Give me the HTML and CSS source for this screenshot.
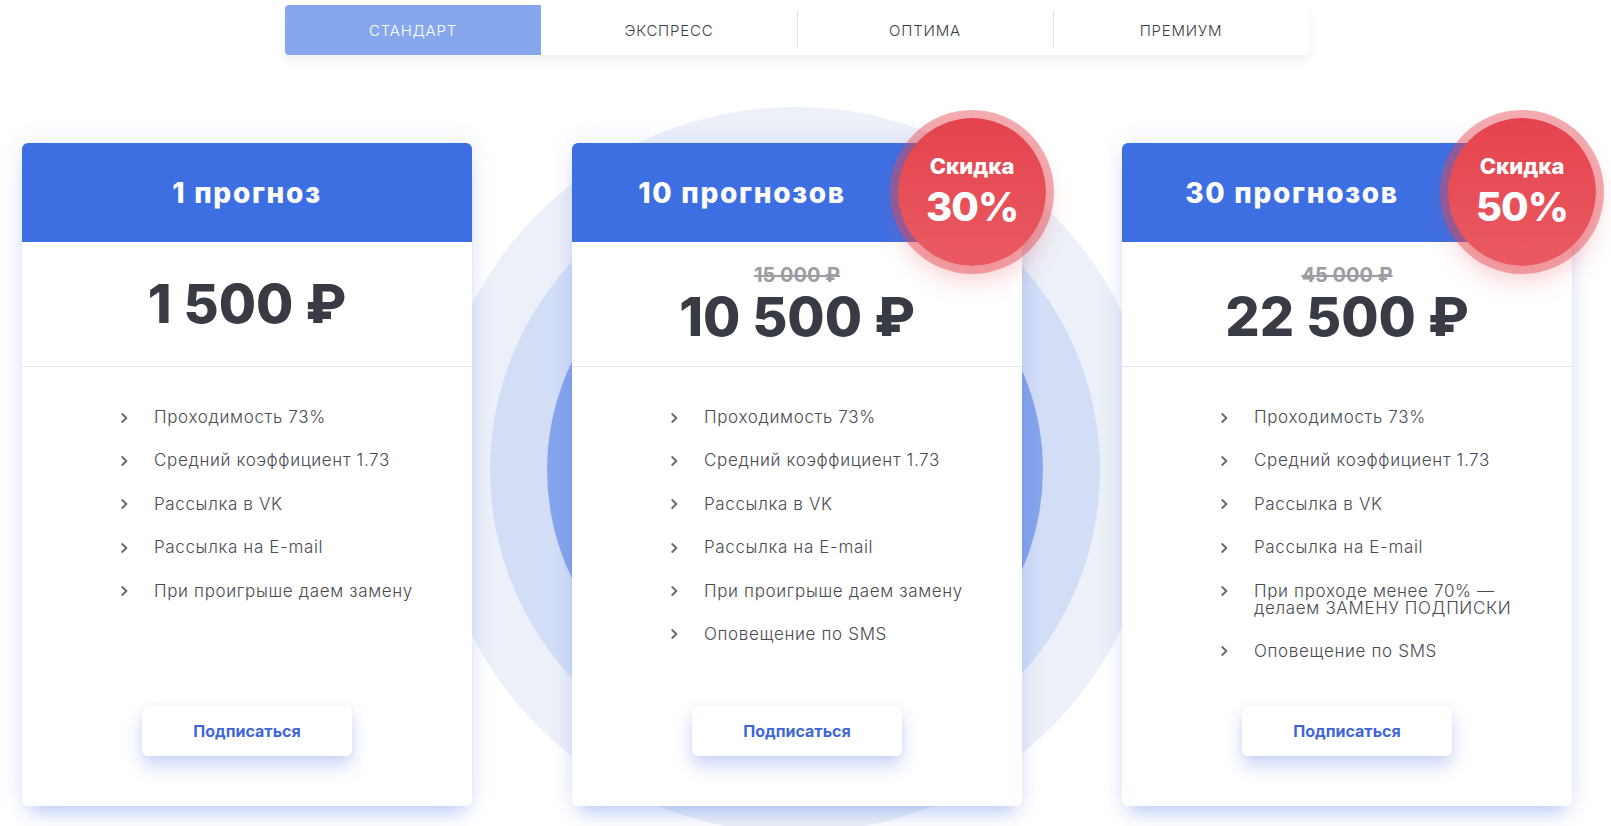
FILE: index.html
```html
<!DOCTYPE html>
<html lang="ru">
<head>
<meta charset="utf-8">
<title>Тарифы</title>
<link rel="stylesheet" href="styles.css">
</head>
<body>
<div class="page">
  <nav class="tabs">
    <div class="tab tab-active">Стандарт</div>
    <div class="tab">Экспресс</div>
    <div class="tab tab-sep">Оптима</div>
    <div class="tab tab-sep">Премиум</div>
  </nav>

  <div class="cards">
    <div class="rings"></div>

    <div class="card">
      <div class="card-head"><h2 class="card-title">1 прогноз</h2></div>
      <div class="card-price">
        <div class="price">1 500 ₽</div>
      </div>
      <ul class="features">
        <li><svg class="chev" viewBox="0 0 7 10"><path d="M1.2 1 L5.4 5 L1.2 9"/></svg><span>Проходимость 73%</span></li>
        <li><svg class="chev" viewBox="0 0 7 10"><path d="M1.2 1 L5.4 5 L1.2 9"/></svg><span>Средний коэффициент 1.73</span></li>
        <li><svg class="chev" viewBox="0 0 7 10"><path d="M1.2 1 L5.4 5 L1.2 9"/></svg><span>Рассылка в VK</span></li>
        <li><svg class="chev" viewBox="0 0 7 10"><path d="M1.2 1 L5.4 5 L1.2 9"/></svg><span>Рассылка на E-mail</span></li>
        <li><svg class="chev" viewBox="0 0 7 10"><path d="M1.2 1 L5.4 5 L1.2 9"/></svg><span>При проигрыше даем замену</span></li>
      </ul>
      <button class="btn">Подписаться</button>
    </div>

    <div class="card">
      <div class="card-head card-head-badge"><h2 class="card-title">10 прогнозов</h2></div>
      <div class="badge"><span class="badge-label">Скидка</span><span class="badge-value">30%</span></div>
      <div class="card-price">
        <div class="old-price">15 000 ₽</div>
        <div class="price">10 500 ₽</div>
      </div>
      <ul class="features">
        <li><svg class="chev" viewBox="0 0 7 10"><path d="M1.2 1 L5.4 5 L1.2 9"/></svg><span>Проходимость 73%</span></li>
        <li><svg class="chev" viewBox="0 0 7 10"><path d="M1.2 1 L5.4 5 L1.2 9"/></svg><span>Средний коэффициент 1.73</span></li>
        <li><svg class="chev" viewBox="0 0 7 10"><path d="M1.2 1 L5.4 5 L1.2 9"/></svg><span>Рассылка в VK</span></li>
        <li><svg class="chev" viewBox="0 0 7 10"><path d="M1.2 1 L5.4 5 L1.2 9"/></svg><span>Рассылка на E-mail</span></li>
        <li><svg class="chev" viewBox="0 0 7 10"><path d="M1.2 1 L5.4 5 L1.2 9"/></svg><span>При проигрыше даем замену</span></li>
        <li><svg class="chev" viewBox="0 0 7 10"><path d="M1.2 1 L5.4 5 L1.2 9"/></svg><span>Оповещение по SMS</span></li>
      </ul>
      <button class="btn">Подписаться</button>
    </div>

    <div class="card">
      <div class="card-head card-head-badge"><h2 class="card-title">30 прогнозов</h2></div>
      <div class="badge"><span class="badge-label">Скидка</span><span class="badge-value">50%</span></div>
      <div class="card-price">
        <div class="old-price">45 000 ₽</div>
        <div class="price">22 500 ₽</div>
      </div>
      <ul class="features">
        <li><svg class="chev" viewBox="0 0 7 10"><path d="M1.2 1 L5.4 5 L1.2 9"/></svg><span>Проходимость 73%</span></li>
        <li><svg class="chev" viewBox="0 0 7 10"><path d="M1.2 1 L5.4 5 L1.2 9"/></svg><span>Средний коэффициент 1.73</span></li>
        <li><svg class="chev" viewBox="0 0 7 10"><path d="M1.2 1 L5.4 5 L1.2 9"/></svg><span>Рассылка в VK</span></li>
        <li><svg class="chev" viewBox="0 0 7 10"><path d="M1.2 1 L5.4 5 L1.2 9"/></svg><span>Рассылка на E-mail</span></li>
        <li><svg class="chev" viewBox="0 0 7 10"><path d="M1.2 1 L5.4 5 L1.2 9"/></svg><span>При проходе менее 70% —<br>делаем ЗАМЕНУ ПОДПИСКИ</span></li>
        <li><svg class="chev" viewBox="0 0 7 10"><path d="M1.2 1 L5.4 5 L1.2 9"/></svg><span>Оповещение по SMS</span></li>
      </ul>
      <button class="btn">Подписаться</button>
    </div>
  </div>
</div>
</body>
</html>
```

FILE: styles.css
```css
* { box-sizing: border-box; }

html, body {
  margin: 0;
  padding: 0;
  background: #ffffff;
  overflow: hidden;
}

body {
  width: 1611px;
  height: 826px;
  font-family: "Inter", "Noto Sans", "Liberation Sans", sans-serif;
  color: #3a3b44;
}

.page {
  padding-top: 5px;
}

/* Tabs */
.tabs {
  display: flex;
  width: 1024px;
  height: 50px;
  margin-left: 285px;
  background: #ffffff;
  border-radius: 4px;
  box-shadow: 0 6px 12px rgba(0, 0, 0, 0.06);
}

.tab {
  position: relative;
  flex: 1;
  display: flex;
  align-items: center;
  justify-content: center;
  font-size: 15px;
  font-weight: 300;
  text-transform: uppercase;
  color: #3c3c44;
  letter-spacing: 0.8px;
}

.tab-active {
  background: #87a7ed;
  color: #ffffff;
  border-radius: 4px 0 0 4px;
}

.tab-sep::before {
  content: "";
  position: absolute;
  left: 0;
  top: 6px;
  bottom: 6px;
  width: 1px;
  background: #e2e2e2;
}

/* Cards */
.cards {
  position: relative;
  display: flex;
  gap: 100px;
  padding-left: 22px;
  margin-top: 88px;
}

.rings {
  position: absolute;
  left: 547px;
  top: 79px;
  width: 496px;
  height: 496px;
  border-radius: 50%;
  background: radial-gradient(circle at 50% 50%, #8aa8ed 0%, #84a3eb 100%);
  box-shadow: 0 0 0 57px #d3def6, 0 0 0 115px #ecf0f8;
  z-index: 0;
}

.card {
  position: relative;
  z-index: 1;
  width: 450px;
  height: 663px;
  background: #ffffff;
  border-radius: 6px;
  display: flex;
  flex-direction: column;
  box-shadow: 0 0 24px rgba(70, 115, 230, 0.13), 0 14px 18px -8px rgba(70, 115, 230, 0.32);
}

.card-head {
  height: 99px;
  background: #3d6fe3;
  border-radius: 6px 6px 0 0;
  display: flex;
  align-items: center;
  justify-content: center;
}

.card-head-badge {
  padding-right: 110px;
}

.card-title {
  margin: 0;
  font-size: 28px;
  font-weight: 800;
  line-height: 30px;
  color: #ffffff;
  letter-spacing: 1.7px;
}

.badge {
  position: absolute;
  left: 326px;
  top: -25.5px;
  width: 148px;
  height: 148px;
  border-radius: 50%;
  background: linear-gradient(180deg, #e4434d 0%, #ea5a62 100%);
  box-shadow: 0 0 0 8px rgba(228, 70, 80, 0.45), 0 14px 26px rgba(229, 72, 82, 0.28);
  display: flex;
  flex-direction: column;
  align-items: center;
  justify-content: center;
  color: #ffffff;
  padding-bottom: 4px;
  z-index: 2;
}

.badge-label {
  font-size: 22px;
  font-weight: 800;
  line-height: 26px;
}

.badge-value {
  margin-top: 8px;
  font-size: 40px;
  font-weight: 800;
  line-height: 40px;
  letter-spacing: -1px;
}

.card-price {
  height: 125px;
  border-bottom: 1px solid #e5e6ea;
  display: flex;
  flex-direction: column;
  align-items: center;
  justify-content: center;
}

.price {
  font-size: 54px;
  font-weight: 800;
  line-height: 56px;
  color: #383a44;
  letter-spacing: 0;
}

.old-price {
  font-size: 20px;
  font-weight: 700;
  line-height: 22px;
  color: #9c9ca2;
  text-decoration: line-through;
  margin-bottom: 3px;
}

.features {
  list-style: none;
  margin: 0;
  padding: 42px 0 0 99px;
  display: flex;
  flex-direction: column;
  gap: 26.4px;
}

.features li {
  display: flex;
  align-items: flex-start;
  font-size: 17px;
  font-weight: 300;
  line-height: 17px;
  color: #4a4b52;
  white-space: nowrap;
  letter-spacing: 0.65px;
}

.chev {
  flex: none;
  width: 7px;
  height: 10px;
  margin-top: 3.5px;
  margin-right: 26px;
  fill: none;
  stroke: #66676d;
  stroke-width: 1.8;
  stroke-linecap: round;
  stroke-linejoin: round;
}

.btn {
  margin: auto auto 50px;
  width: 210px;
  height: 50px;
  border: none;
  border-radius: 6px;
  background: #ffffff;
  font-family: inherit;
  font-size: 16px;
  font-weight: 700;
  color: #3f66d8;
  box-shadow: 0 0 6px rgba(0, 0, 0, 0.04), 0 10px 18px rgba(70, 110, 230, 0.28);
}
```
